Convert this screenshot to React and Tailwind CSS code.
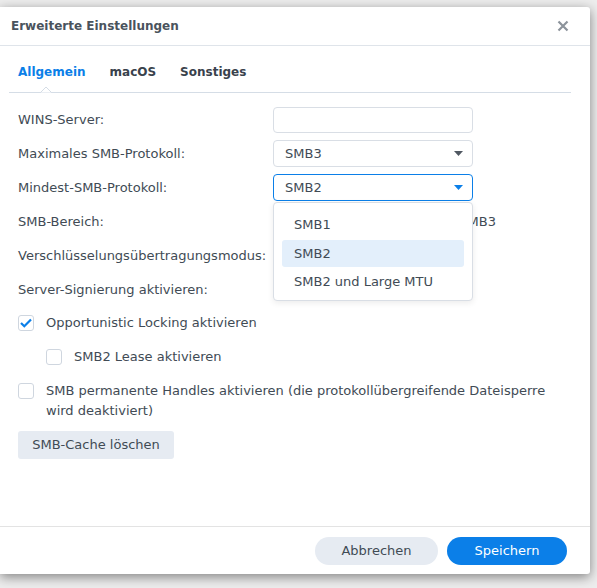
import React from "react";

const font = { fontFamily: '"DejaVu Sans", Verdana, sans-serif' };

// Small caret for the select boxes
const Caret = ({ active }) => (
  <svg width="9" height="5" viewBox="0 0 9 5" className="shrink-0">
    <path d="M0 0h9L4.5 5z" fill={active ? "#0b7fe8" : "#505862"} />
  </svg>
);

const Checkbox = ({ checked }) => (
  <span className="flex h-[16px] w-[16px] shrink-0 items-center justify-center rounded-[3px] border border-[#cfd6df] bg-white">
    {checked && (
      <svg width="12" height="10" viewBox="0 0 12 10">
        <path d="M1 5 4.3 8.3 11 1.5" fill="none" stroke="#0b7fe8" strokeWidth="2.2" />
      </svg>
    )}
  </span>
);

const Row = ({ label, children }) => (
  <div className="flex h-[27px] items-center">
    <div className="w-[255px] shrink-0">{label}</div>
    <div className="w-[200px]">{children}</div>
  </div>
);

const Select = ({ value, active }) => (
  <div
    className={`flex h-[27px] items-center justify-between rounded-[4px] border bg-white pl-[11px] pr-[9px] ${
      active ? "border-[#0b7fe8]" : "border-[#d9dee5]"
    }`}
  >
    <span>{value}</span>
    <Caret active={active} />
  </div>
);

export default function App() {
  return (
    <div className="h-[588px] w-[597px] overflow-hidden bg-[#ededed] pt-[7px]" style={font}>
      <div className="relative flex h-[567px] w-[590px] flex-col rounded-r-[3px] bg-white text-[13px] text-[#414b55] shadow-[0_3px_12px_rgba(0,0,0,0.45)]">
        {/* header */}
        <div className="flex h-[39px] shrink-0 items-center justify-between border-b border-[#dfe4ea] pl-[11px] pr-[21px]">
          <span className="text-[12px] font-bold text-[#4a535d]">Erweiterte Einstellungen</span>
          <svg width="12" height="12" viewBox="0 0 12 12">
            <path d="M1.5 1.5l9 9M10.5 1.5l-9 9" stroke="#8c939b" strokeWidth="2.2" />
          </svg>
        </div>

        {/* tabs */}
        <div className="relative mx-[9px] mr-[19px] flex h-[47px] items-center gap-[24px] border-b border-[#d5dde6] pl-[9px] pt-[6px] text-[12px] font-bold">
          <span className="text-[#0b7fe8]">Allgemein</span>
          <span className="text-[#39424c]">macOS</span>
          <span className="text-[#39424c]">Sonstiges</span>
          <svg
            width="12"
            height="7"
            viewBox="0 0 12 7"
            className="absolute bottom-[-1px] left-[31px]"
          >
            <path d="M0 6.5h0.5L6 1l5.5 5.5H12" fill="white" stroke="#d5dde6" strokeWidth="1" />
          </svg>
        </div>

        {/* form */}
        <div className="relative flex flex-1 flex-col px-[18px] pt-[13px]">
          <div className="flex flex-col gap-[7px]">
            <Row label="WINS-Server:">
              <div className="h-[26px] rounded-[4px] border border-[#d9dee5] bg-white" />
            </Row>
            <Row label="Maximales SMB-Protokoll:">
              <Select value="SMB3" />
            </Row>
            <Row label="Mindest-SMB-Protokoll:">
              <Select value="SMB2" active />
            </Row>
            <Row label="SMB-Bereich:">
              <div className="w-[223px] whitespace-nowrap text-right">SMB2 bis SMB3</div>
            </Row>
            <Row label="Verschlüsselungsübertragungsmodus:" />
            <Row label="Server-Signierung aktivieren:" />
          </div>

          <div className="mt-[12px] flex h-[16px] items-center gap-[12px]">
            <Checkbox checked />
            <span>Opportunistic Locking aktivieren</span>
          </div>
          <div className="mt-[18px] flex h-[16px] items-center gap-[12px] pl-[28px]">
            <Checkbox />
            <span>SMB2 Lease aktivieren</span>
          </div>
          <div className="mt-[16px] flex items-start gap-[12px]">
            <span className="mt-[2px]">
              <Checkbox />
            </span>
            <span className="w-[510px] leading-[20px]">
              SMB permanente Handles aktivieren (die protokollübergreifende Dateisperre wird deaktiviert)
            </span>
          </div>
          <div className="mt-[10px]">
            <button className="h-[28px] w-[156px] rounded-[3px] bg-[#e6ebf2] text-[#414b55]">
              SMB-Cache löschen
            </button>
          </div>

          {/* open dropdown list */}
          <div className="absolute left-[273px] top-[109px] flex w-[200px] flex-col rounded-[4px] border border-[#d9dee5] bg-white px-[8px] pb-[3px] pt-[7px] shadow-[0_2px_6px_rgba(0,0,0,0.08)]">
            <div className="flex h-[30px] items-center px-[12px]">SMB1</div>
            <div className="flex h-[27px] items-center rounded-[3px] bg-[#e3effb] px-[12px]">SMB2</div>
            <div className="flex h-[30px] items-center px-[12px]">SMB2 und Large MTU</div>
          </div>
        </div>

        {/* footer */}
        <div className="flex h-[48px] shrink-0 items-center justify-end gap-[9px] border-t border-[#e3e3e3] pr-[23px]">
          <button className="h-[28px] w-[123px] rounded-full bg-[#e6ebf2] text-[#414b55]">Abbrechen</button>
          <button className="h-[28px] w-[120px] rounded-full bg-[#0b7fe8] text-white">Speichern</button>
        </div>
      </div>
    </div>
  );
}
